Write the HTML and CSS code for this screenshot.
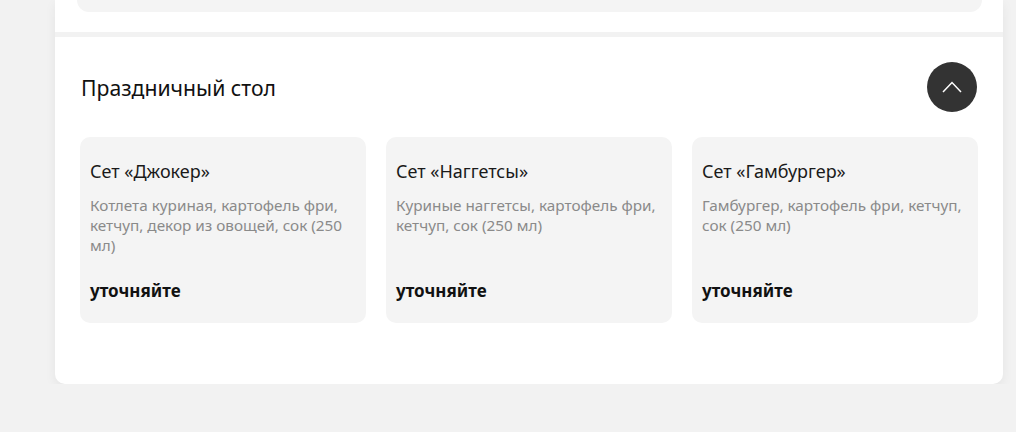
FILE: index.html
```html
<!DOCTYPE html>
<html lang="ru">
  <head>
    <meta charset="UTF-8" />
    <meta name="viewport" content="width=device-width, initial-scale=1.0" />
    <title>Праздничный стол</title>
    <link rel="stylesheet" href="styles.css">
  </head>
  <body>
    <div class="panel">
      <div class="prev">
        <div class="prev-card"></div>
      </div>

      <div class="section">
        <div class="section-head">
          <h2>Праздничный стол</h2>
          <button class="btn-toggle" aria-label="Свернуть">
            <svg width="20" height="12" viewBox="0 0 20 12">
              <polyline points="1,11 10,1.5 19,11" fill="none" stroke="#fff" stroke-width="1.5" />
            </svg>
          </button>
        </div>

        <div class="cards">
          <div class="card">
            <div class="card-title">Сет «Джокер»</div>
            <div class="card-desc">Котлета куриная, картофель фри, кетчуп, декор из овощей, сок (250 мл)</div>
            <div class="card-price">уточняйте</div>
          </div>
          <div class="card">
            <div class="card-title">Сет «Наггетсы»</div>
            <div class="card-desc">Куриные наггетсы, картофель фри, кетчуп, сок (250 мл)</div>
            <div class="card-price">уточняйте</div>
          </div>
          <div class="card">
            <div class="card-title">Сет «Гамбургер»</div>
            <div class="card-desc">Гамбургер, картофель фри, кетчуп, сок (250 мл)</div>
            <div class="card-price">уточняйте</div>
          </div>
        </div>
      </div>
    </div>
  </body>
</html>
```

FILE: styles.css
```css
* {
  margin: 0;
  padding: 0;
  box-sizing: border-box;
}

body {
  font-family: "Noto Sans", "Open Sans", sans-serif;
  background: #f2f2f2;
  color: #1a1a1a;
}

.panel {
  width: 948px;
  margin-left: 55px;
  background: #fff;
  border-radius: 0 0 10px 10px;
  box-shadow: 0 4px 12px rgba(0, 0, 0, 0.06);
}

.prev {
  padding: 0 21px 20px 22px;
}

.prev-card {
  height: 12px;
  background: #f4f4f4;
  border-radius: 0 0 18px 18px;
}

.section {
  border-top: 5px solid #f2f2f2;
  padding: 25px 25px 61px;
}

.section-head {
  display: flex;
  align-items: center;
  justify-content: space-between;
  margin-bottom: 25px;
}

h2 {
  font-size: 21.2px;
  font-weight: 400;
  color: #111;
  padding-left: 1px;
}

.btn-toggle {
  width: 50px;
  height: 50px;
  margin-right: 1px;
  border: none;
  border-radius: 50%;
  background: #333;
  display: flex;
  align-items: center;
  justify-content: center;
  cursor: pointer;
}

.btn-toggle svg {
  margin-top: -1px;
}

.cards {
  display: grid;
  grid-template-columns: repeat(3, 286px);
  gap: 20px;
}

.card {
  height: 186px;
  background: #f4f4f4;
  border-radius: 10px;
  padding: 22px 10px 20px;
  display: flex;
  flex-direction: column;
}

.card-title {
  font-size: 18px;
  line-height: 24px;
  color: #1a1a1a;
  margin-bottom: 12px;
}

.card-desc {
  font-size: 15.3px;
  line-height: 20px;
  color: #8a8a8a;
}

.card-price {
  margin-top: auto;
  font-size: 17px;
  font-weight: 700;
  line-height: 24px;
  color: #111;
}
```
